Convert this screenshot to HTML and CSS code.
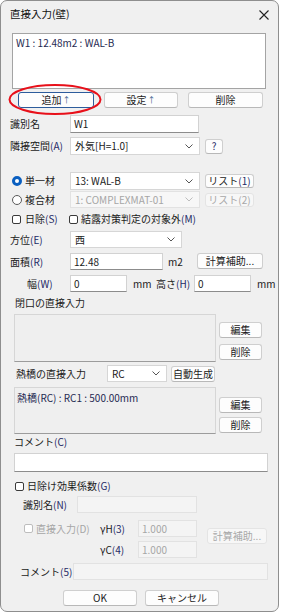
FILE: index.html
```html
<!DOCTYPE html>
<html lang="ja">
<head>
<meta charset="utf-8">
<title>直接入力(壁)</title>
<link rel="stylesheet" href="styles.css">
</head>
<body>
<div class="win">
  <div class="titlebar">
    <span class="title">直接入力(壁)</span>
    <svg class="close" width="10" height="10" viewBox="0 0 10 10"><path d="M0.5 0.5L9.5 9.5M9.5 0.5L0.5 9.5" stroke="#222" stroke-width="1.1" fill="none"/></svg>
  </div>

  <div class="listbox"><span class="navy">W1 : 12.48m2 : WAL-B</span></div>

  <div class="btnrow">
    <div class="btn default w-add">追加<span class="arr">↑</span></div>
    <div class="btn w-set">設定<span class="arr">↑</span></div>
    <div class="btn w-del">削除</div>
    <svg class="ring" width="96" height="38" viewBox="0 0 96 38"><ellipse cx="47" cy="18.5" rx="45.5" ry="14.5" fill="none" stroke="#e8101a" stroke-width="2"/></svg>
  </div>

  <div class="f r-name">
    <span class="lab">識別名</span>
    <div class="tb w-name">W1</div>
  </div>

  <div class="f r-adj">
    <span class="lab">隣接空間<span class="k">(A)</span></span>
    <div class="sel w-sel"><span>外気[H=1.0]</span><svg class="chev" width="8" height="5" viewBox="0 0 8 5"><path d="M0.5 0.5L4 4L7.5 0.5" stroke="#555" fill="none"/></svg></div>
    <div class="btn w-q"><span class="k">?</span></div>
  </div>

  <div class="f r-single">
    <span class="lab rad"><span class="radio on"></span>単一材</span>
    <div class="sel w-sel"><span>13: WAL-B</span><svg class="chev" width="8" height="5" viewBox="0 0 8 5"><path d="M0.5 0.5L4 4L7.5 0.5" stroke="#555" fill="none"/></svg></div>
    <div class="btn w-list">リスト<span class="k">(1)</span></div>
  </div>

  <div class="f r-comp">
    <span class="lab rad"><span class="radio"></span>複合材</span>
    <div class="sel w-sel dis"><span>1: COMPLEXMAT-01</span><svg class="chev" width="8" height="5" viewBox="0 0 8 5"><path d="M0.5 0.5L4 4L7.5 0.5" stroke="#bdbdbd" fill="none"/></svg></div>
    <div class="btn w-list dis">リスト(2)</div>
  </div>

  <div class="f r-chk">
    <span class="chkcell"><span class="cb"></span>日除<span class="k">(S)</span></span>
    <span class="chkcell2"><span class="cb"></span>結露対策判定の対象外<span class="k">(M)</span></span>
  </div>

  <div class="f r-dir">
    <span class="lab">方位<span class="k">(E)</span></span>
    <div class="sel w-dir"><span>西</span><svg class="chev" width="8" height="5" viewBox="0 0 8 5"><path d="M0.5 0.5L4 4L7.5 0.5" stroke="#555" fill="none"/></svg></div>
  </div>

  <div class="f r-area">
    <span class="lab">面積<span class="k">(R)</span></span>
    <div class="tb w-area">12.48</div>
    <span class="unit-m2">m2</span>
    <div class="btn w-calc">計算補助...</div>
  </div>

  <div class="f r-wh">
    <span class="lab lab-w">幅<span class="k">(W)</span></span>
    <div class="tb w-wh">0</div>
    <span class="unit-mm">mm</span>
    <span class="lab-h">高さ<span class="k">(H)</span></span>
    <div class="tb w-wh">0</div>
    <span class="unit-mm">mm</span>
  </div>

  <div class="sec r-open">閉口の直接入力</div>
  <div class="grp g1">
    <div class="gbox"></div>
    <div class="gbtns">
      <div class="btn w-g">編集</div>
      <div class="btn w-g">削除</div>
    </div>
  </div>

  <div class="f r-heat">
    <span class="lab-heat">熱橋の直接入力</span>
    <div class="sel w-rc"><span>RC</span><svg class="chev" width="8" height="5" viewBox="0 0 8 5"><path d="M0.5 0.5L4 4L7.5 0.5" stroke="#555" fill="none"/></svg></div>
    <div class="btn w-auto">自動生成</div>
  </div>
  <div class="grp g2">
    <div class="gbox"><span class="navy">熱橋(RC) : RC1 : 500.00mm</span></div>
    <div class="gbtns">
      <div class="btn w-g">編集</div>
      <div class="btn w-g">削除</div>
    </div>
  </div>

  <div class="sec r-cmt">コメント<span class="k">(C)</span></div>
  <div class="tb r-cmtbox"></div>

  <div class="f r-shade">
    <span class="cb"></span><span class="shade-t">日除け効果係数<span class="k">(G)</span></span>
  </div>

  <div class="f r-sname">
    <span class="lab-n">識別名<span class="k">(N)</span></span>
    <div class="tb dis w-sname"></div>
  </div>

  <div class="blk">
    <div class="blk-l">
      <div class="brow">
        <span class="dcell"><span class="cb dis"></span><span class="dtxt">直接入力(D)</span></span>
        <span class="gcell">γH<span class="k">(3)</span></span>
        <div class="tb dis w-g2">1.000</div>
      </div>
      <div class="brow">
        <span class="dcell"></span>
        <span class="gcell">γC<span class="k">(4)</span></span>
        <div class="tb dis w-g2">1.000</div>
      </div>
    </div>
    <div class="btn dis w-calc2">計算補助...</div>
  </div>

  <div class="f r-c5">
    <span class="lab-c5">コメント<span class="k">(5)</span></span>
    <div class="tb dis w-c5"></div>
  </div>

  <div class="f r-ok">
    <div class="btn w-ok">OK</div>
    <div class="btn w-cancel">キャンセル</div>
  </div>
</div>
</body>
</html>
```

FILE: styles.css
```css
* { box-sizing: border-box; margin: 0; padding: 0; }
body {
  background: #ffffff;
  font-family: "Noto Sans CJK JP", "Noto Sans", sans-serif;
  font-size: 10px;
  color: #1b1b1b;
  line-height: 1;
}
.win {
  width: 279px;
  height: 612px;
  border: 1px solid #8e8e8e;
  border-radius: 7px;
  background: #f0f0f0;
  overflow: hidden;
}
.titlebar {
  height: 27px;
  display: flex;
  align-items: center;
  padding-left: 9px;
  padding-right: 9px;
}
.title { font-size: 10.5px; color: #111; }
.close { margin-left: auto; }

.navy { color: #1f2a52; }
.k { color: #1f2a66; }

.listbox {
  margin: 5px 0 0 11px;
  width: 254px;
  height: 56px;
  background: #fff;
  border: 1px solid #a4a4a4;
  padding: 4px 3px;
  font-size: 10px;
}

.btn {
  display: flex;
  align-items: center;
  justify-content: center;
  height: 16px;
  background: #fdfdfd;
  border: 1px solid #cfcfcf;
  border-bottom-color: #b8b8b8;
  border-radius: 3px;
  font-size: 10px;
  color: #1b1b1b;
  flex: none;
}
.btn.default { border-color: #2d5c9c; }
.btn.dis { color: #a8a8a8; border-color: #e4e4e4; background: #f7f7f7; }
.arr { font-size: 8px; color: #3e5f8f; margin-left: 1px; }

.btnrow {
  position: relative;
  display: flex;
  margin-top: 3px;
  height: 16px;
}
.w-add { margin-left: 17px; width: 76px; }
.w-set { margin-left: 10px; width: 74px; }
.w-del { margin-left: 10px; width: 75px; }
.ring { position: absolute; left: 7px; top: -11px; }

.f {
  display: flex;
  align-items: center;
  margin-left: 9px;
}
.lab { width: 60px; flex: none; display: flex; align-items: center; }
.tb {
  height: 100%;
  background: #fff;
  border: 1px solid #d2d2d2;
  border-bottom-color: #8c8c8c;
  padding-left: 3px;
  display: flex;
  align-items: center;
  flex: none;
}
.tb.dis { background: #f4f4f4; border-color: #e2e2e2; color: #a6a6a6; }
.sel {
  height: 100%;
  background: #fff;
  border: 1px solid #d6d6d6;
  display: flex;
  align-items: center;
  justify-content: space-between;
  padding: 0 6px 0 4px;
  flex: none;
}
.sel.dis { background: #f7f7f7; color: #a6a6a6; border-color: #e2e2e2; }

.r-name { margin-top: 7px; height: 18px; }
.w-name { width: 129px; }
.r-adj { margin-top: 4px; height: 18px; }
.w-sel { width: 130px; }
.w-q { margin-left: 5px; width: 18px; height: 15px; }

.r-single { margin-top: 17px; height: 18px; }
.r-comp { margin-top: 1px; height: 17px; }
.rad { padding-left: 2px; }
.radio {
  width: 10px; height: 10px; border-radius: 50%;
  border: 1px solid #5a5a5a; background: #fff;
  margin-right: 3px; flex: none;
}
.radio.on {
  border: 3px solid #0a5fc0;
  background: #fff;
}
.w-list { margin-left: 5px; width: 49px; height: 14px; }

.r-chk { margin-top: 4px; height: 14px; }
.cb {
  width: 9px; height: 9px; border: 1px solid #3a3a3a; border-radius: 2px;
  background: #fff; flex: none;
}
.cb.dis { border-color: #bdbdbd; }
.chkcell { width: 59px; display: flex; align-items: center; padding-left: 2px; flex: none; }
.chkcell .cb { margin-right: 4px; }
.chkcell2 { display: flex; align-items: center; }
.chkcell2 .cb { margin-right: 3px; }

.r-dir { margin-top: 5px; height: 17px; }
.w-dir { width: 112px; }

.r-area { margin-top: 5px; height: 17px; align-items: flex-start; }
.r-area .lab { height: 17px; }
.w-area { width: 93px; }
.unit-m2 { width: 34px; padding-left: 5px; align-self: center; flex: none; }
.w-calc { width: 66px; height: 16px; }

.r-wh { margin-top: 5px; height: 17px; }
.lab-w { padding-left: 17px; }
.w-wh { width: 57px; }
.unit-mm { width: 23px; padding-left: 6px; flex: none; }
.lab-h { width: 44px; padding-left: 6px; flex: none; }

.sec { margin-left: 14px; height: 12px; display: flex; align-items: center; }
.r-open { margin-top: 5px; }

.grp { display: flex; margin-left: 13px; }
.g1 { margin-top: 5px; }
.g2 { margin-top: 5px; }
.gbox {
  width: 202px;
  height: 48px;
  background: #efefef;
  border: 1px solid #d6d6d6;
  border-bottom-color: #9c9c9c;
  padding: 6px 2px;
  flex: none;
}
.g2 .gbox { height: 47px; padding-top: 5px; }
.gbtns { margin-left: 3px; display: flex; flex-direction: column; gap: 6px; padding-top: 8px; }
.g2 .gbtns { padding-top: 10px; gap: 4px; }
.w-g { width: 43px; }

.r-heat { margin-top: 3px; height: 17px; margin-left: 15px; }
.lab-heat { width: 91px; flex: none; }
.w-rc { width: 60px; }
.w-auto { margin-left: 4px; width: 44px; }

.r-cmt { margin-top: 2px; margin-left: 13px; }
.r-cmtbox { margin: 5px 0 0 13px; width: 254px; height: 19px; }

.r-shade { margin-top: 7px; height: 14px; margin-left: 14px; }
.shade-t { margin-left: 3px; }

.r-sname { margin-top: 3px; height: 17px; margin-left: 22px; }
.lab-n { width: 54px; flex: none; }
.w-sname { width: 120px; }

.blk { display: flex; margin-top: 7px; margin-left: 23px; }
.blk-l { display: flex; flex-direction: column; gap: 4px; }
.brow { display: flex; align-items: center; height: 17px; }
.dcell { width: 76px; display: flex; align-items: center; flex: none; }
.dtxt { margin-left: 3px; color: #a6a6a6; }
.gcell { width: 38px; flex: none; }
.w-g2 { width: 59px; }
.w-calc2 { margin-left: 10px; margin-top: 8px; width: 60px; border-color: #f7f7f7; }

.r-c5 { margin-top: 5px; height: 17px; margin-left: 19px; }
.lab-c5 { width: 53px; flex: none; }
.w-c5 { width: 195px; }

.r-ok { margin-top: 10px; height: 16px; margin-left: 0; }
.w-ok { margin-left: 62px; width: 74px; }
.w-cancel { margin-left: 8px; width: 74px; }
```
